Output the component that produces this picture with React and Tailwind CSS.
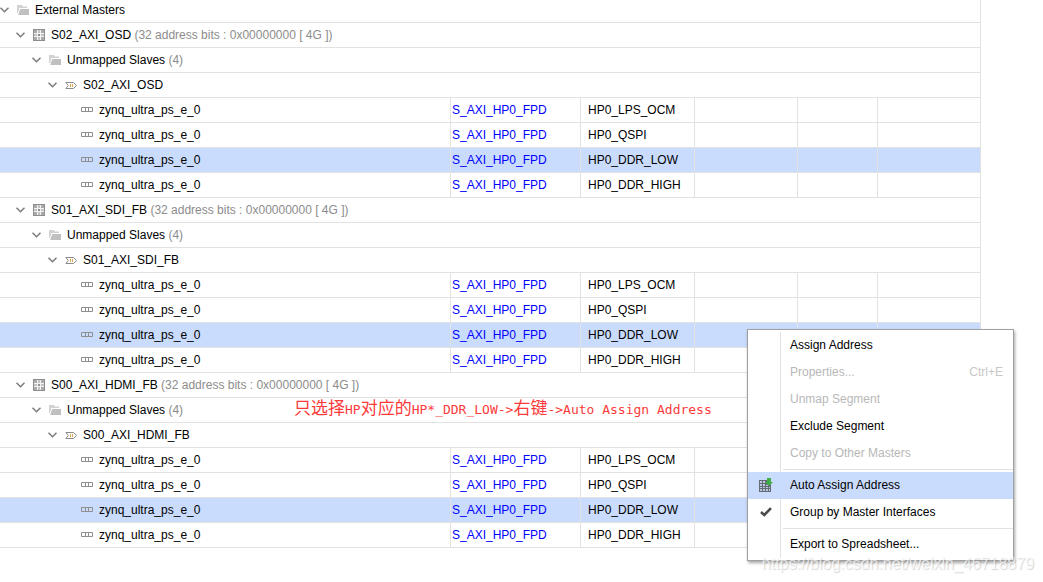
import { Fragment } from "react";

const MASTERS = [
  { name: "S02_AXI_OSD", selected: "HP0_DDR_LOW" },
  { name: "S01_AXI_SDI_FB", selected: "HP0_DDR_LOW" },
  { name: "S00_AXI_HDMI_FB", selected: "HP0_DDR_LOW" },
];

const SEGMENTS = ["HP0_LPS_OCM", "HP0_QSPI", "HP0_DDR_LOW", "HP0_DDR_HIGH"];

const MENU = [
  { label: "Assign Address" },
  { label: "Properties...", shortcut: "Ctrl+E", disabled: true },
  { label: "Unmap Segment", disabled: true },
  { label: "Exclude Segment" },
  { label: "Copy to Other Masters", disabled: true },
  { separator: true },
  { label: "Auto Assign Address", icon: AutoAssignIcon, active: true },
  { label: "Group by Master Interfaces", icon: CheckIcon },
  { separator: true },
  { label: "Export to Spreadsheet..." },
];

function ChevronIcon() {
  return (
    <svg width="9" height="6" viewBox="0 0 9 6" fill="none" stroke="#7a7a7a" strokeWidth="1.5">
      <path d="M0.5 0.8 L4.5 4.8 L8.5 0.8" />
    </svg>
  );
}

function FolderIcon() {
  return (
    <svg width="12" height="10" viewBox="0 0 12 10">
      <path d="M0 0h5l1 1.500h4V3H2.500L1 8H0z" fill="#d2d2d2" />
      <path d="M3.200 4H12v6H1.200z" fill="#c0c0c0" />
    </svg>
  );
}

function GridIcon() {
  return (
    <svg width="12" height="12" viewBox="0 0 12 12" shapeRendering="crispEdges">
      <path d="M0 0h12v12H0z" fill="#8e8e8e" />
      <path d="M1 1h3v3H1zM8 1h3v3H8zM1 8h3v3H1zM8 8h3v3H8z" fill="#ababab" />
      <path d="M4 1h1v10H4zM7 1h1v10H7zM1 4h10v1H1zM1 7h10v1H1z" fill="#f2f2f2" />
      <path d="M5 1h2v3H5zM1 5h3v2H1zM8 5h3v2H8zM5 8h2v3H5z" fill="#c2c2c2" />
    </svg>
  );
}

function InterfaceIcon() {
  return (
    <svg width="12" height="7" viewBox="0 0 12 7" fill="none">
      <path d="M0.800 0.500h7.700l3 3l-3 3H0.800l2.500-3z" stroke="#8c8c8c" />
      <path d="M5.500 2v3M7.500 2v3" stroke="#e6a352" />
    </svg>
  );
}

function SegmentIcon() {
  return (
    <svg width="12" height="7" viewBox="0 0 12 7" fill="none" stroke="#8f8f8f">
      <path d="M0.500 0.500h11v4H0.500zM4.500 0.500v4M7.500 0.500v4" />
    </svg>
  );
}

function AutoAssignIcon() {
  return (
    <svg width="14" height="14" viewBox="0 0 14 14">
      <path d="M0 2h12v12H0z" fill="#666b73" />
      <path d="M1 3h2v2H1zM4 3h2v2H4zM1 6h2v2H1zM4 6h2v2H4zM7 7h2v1H7zM1 9h2v1H1zM4 9h2v1H4zM7 9h2v1H7zM10 9h1v1h-1zM1 11h2v2H1zM4 11h2v2H4zM7 11h2v2H7zM10 11h1v2h-1z" fill="#b9c8e2" />
      <path d="M8 0h4v4h2l-4 4l-4-4h2z" fill="#3fae49" />
    </svg>
  );
}

function CheckIcon() {
  return (
    <svg width="12" height="10" viewBox="0 0 12 10" fill="none" stroke="#4a4a4a" strokeWidth="2.6">
      <path d="M1 5 L4.300 8 L11 1.200" />
    </svg>
  );
}

function TreeLabel({ indent, icon: Icon, label, note, toggle = true }) {
  return (
    <div className={`flex items-center ${indent}`}>
      {toggle && (
        <button aria-label={`Collapse ${label}`} className="mr-2 w-[9px] shrink-0">
          <ChevronIcon />
        </button>
      )}
      <span className="flex w-3 shrink-0 justify-center"><Icon /></span>
      <span className="ml-1.5 whitespace-pre">
        {label}
        {note && <span className="text-[#8c8c8c]"> {note}</span>}
      </span>
    </div>
  );
}

function GroupRow(props) {
  return (
    <tr className="h-[25px]">
      <td colSpan={6} className="border-r border-b border-[#e2e2e2] p-0">
        <TreeLabel {...props} />
      </td>
    </tr>
  );
}

function SegmentRow({ segment, selected }) {
  const cell = "border-r border-b border-[#e2e2e2] p-0";
  return (
    <tr className={`h-[25px] ${selected ? "bg-[#cadcfe]" : ""}`}>
      <td className={cell}>
        <TreeLabel indent="pl-[81px]" icon={SegmentIcon} label="zynq_ultra_ps_e_0" toggle={false} />
      </td>
      <td className={`${cell} pl-px text-[#0000ff]`}>S_AXI_HP0_FPD</td>
      <td className={`${cell} pl-[7px]`}>{segment}</td>
      <td className={cell} />
      <td className={cell} />
      <td className={cell} />
    </tr>
  );
}

function AddressTable() {
  return (
    <table className="-mt-0.5 w-full table-fixed border-separate border-spacing-0">
      <colgroup>
        <col />
        <col className="w-[130px]" />
        <col className="w-[114px]" />
        <col className="w-[103px]" />
        <col className="w-[80px]" />
        <col className="w-[103px]" />
      </colgroup>
      <tbody>
        <GroupRow indent="pl-0" icon={FolderIcon} label="External Masters" />
        {MASTERS.map((master) => (
          <Fragment key={master.name}>
            <GroupRow
              indent="pl-4"
              icon={GridIcon}
              label={master.name}
              note="(32 address bits : 0x00000000 [ 4G ])"
            />
            <GroupRow indent="pl-8" icon={FolderIcon} label="Unmapped Slaves" note="(4)" />
            <GroupRow indent="pl-12" icon={InterfaceIcon} label={master.name} />
            {SEGMENTS.map((segment) => (
              <SegmentRow key={segment} segment={segment} selected={segment === master.selected} />
            ))}
          </Fragment>
        ))}
      </tbody>
    </table>
  );
}

function ContextMenu() {
  return (
    <div
      role="menu"
      className="absolute top-[329px] right-[29px] w-[267px] border border-[#a0a0a0] bg-white py-0.5 shadow-[1px_2px_3px_rgba(0,0,0,0.35)]"
    >
      {MENU.map((item, i) => {
        if (item.separator) {
          return (
            <div key={i} role="separator" className="flex h-[5px] items-center">
              <span className="h-full w-[33px] border-r border-[#e2e2e2]" />
              <span className="ml-0.5 h-px flex-1 bg-[#e2e2e2]" />
            </div>
          );
        }
        const Icon = item.icon;
        return (
          <button
            key={i}
            role="menuitem"
            disabled={item.disabled}
            className={`flex h-[27px] w-full items-center text-left ${item.active ? "bg-[#cadcfe]" : ""} ${
              item.disabled ? "text-[#b8b8b8]" : "text-black"
            }`}
          >
            <span
              className={`flex h-full w-[33px] items-center justify-center border-r pb-0.5 pl-1 ${
                item.active ? "border-transparent" : "border-[#e2e2e2]"
              }`}
            >
              {Icon && <Icon />}
            </span>
            <span className="ml-[9px] flex-1 pb-0.5">{item.label}</span>
            {item.shortcut && <span className="mr-2.5 pb-0.5 text-[#c8c8c8]">{item.shortcut}</span>}
          </button>
        );
      })}
    </div>
  );
}

export default function App() {
  return (
    <div className="relative min-h-screen overflow-hidden bg-white pr-[62px] font-['Liberation_Sans',Arial,sans-serif] text-xs text-black">
      <AddressTable />

      {/* Annotation over the tree */}
      <p className="absolute top-[398px] left-[294px] font-['DejaVu_Sans_Mono','Noto_Sans_CJK_SC',monospace] text-[13px] leading-5 whitespace-nowrap text-[#fb3b3b]">
        <span className="text-[17px]">只选择</span>HP<span className="text-[17px]">对应的</span>
        HP*_DDR_LOW-&gt;<span className="text-[17px]">右键</span>-&gt;Auto Assign Address
      </p>

      <ContextMenu />

      {/* Watermark */}
      <span className="absolute right-[9px] bottom-2 text-base leading-5 text-white/70 [text-shadow:1px_1px_1px_rgba(0,0,0,0.16)]">
        https://blog.csdn.net/weixin_46718879
      </span>
    </div>
  );
}
